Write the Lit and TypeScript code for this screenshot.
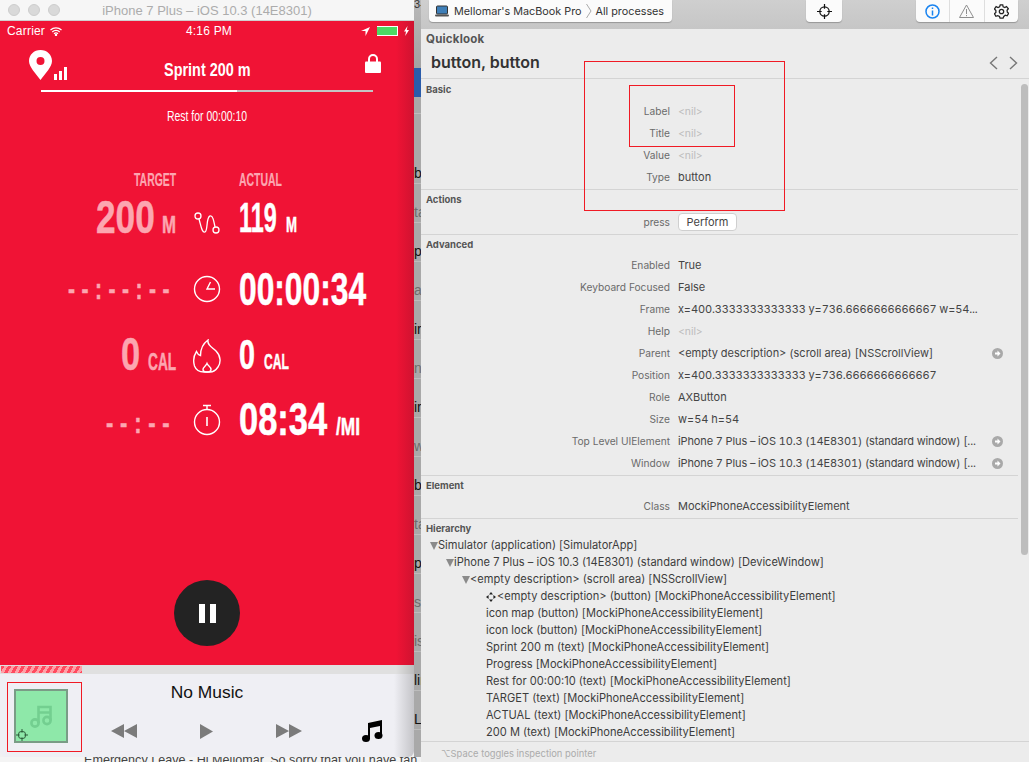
import { LitElement, html, css, svg } from "lit";
import { customElement } from "lit/decorators.js";

type Row = { k: string; v: string; nil?: boolean; arrow?: boolean; tight?: boolean };

const basic: Row[] = [
  { k: "Label", v: "<nil>", nil: true },
  { k: "Title", v: "<nil>", nil: true },
  { k: "Value", v: "<nil>", nil: true },
  { k: "Type", v: "button" },
];
const advanced: Row[] = [
  { k: "Enabled", v: "True" },
  { k: "Keyboard Focused", v: "False" },
  { k: "Frame", v: "x=400.3333333333333 y=736.6666666666667 w=54...", tight: true },
  { k: "Help", v: "<nil>", nil: true },
  { k: "Parent", v: "<empty description> (scroll area) [NSScrollView]", arrow: true },
  { k: "Position", v: "x=400.3333333333333 y=736.6666666666667", tight: true },
  { k: "Role", v: "AXButton" },
  { k: "Size", v: "w=54 h=54" },
  { k: "Top Level UIElement", v: "iPhone 7 Plus – iOS 10.3 (14E8301) (standard window) [...", arrow: true, tight: true },
  { k: "Window", v: "iPhone 7 Plus – iOS 10.3 (14E8301) (standard window) [...", arrow: true, tight: true },
];
const leaves = [
  "icon map (button) [MockiPhoneAccessibilityElement]",
  "icon lock (button) [MockiPhoneAccessibilityElement]",
  "Sprint 200 m (text) [MockiPhoneAccessibilityElement]",
  "Progress [MockiPhoneAccessibilityElement]",
  "Rest for 00:00:10 (text) [MockiPhoneAccessibilityElement]",
  "TARGET (text) [MockiPhoneAccessibilityElement]",
  "ACTUAL (text) [MockiPhoneAccessibilityElement]",
  "200 M (text) [MockiPhoneAccessibilityElement]",
];
const stripRows = [
  ["b", 1], ["ta", 0], ["p", 1], ["at", 0], ["ir", 1], ["ng", 0], ["ir", 1], ["w", 0],
  ["b", 1], ["ta", 0], ["p", 1], ["si", 0], ["is", 0], ["lir", 1], ["Le", 1],
] as [string, number][];

const tri = svg`<svg class="tri" width="8" height="8" viewBox="0 0 8 8"><path d="M0 0H8L4 8Z" fill="#8a8a8a"/></svg>`;
const cross = (c: string, s: number) => svg`<svg width="${s}" height="${s}" viewBox="0 0 16 16" fill="none" stroke="${c}" stroke-width="1.3"><circle cx="8" cy="8" r="5"/><path d="M8 0V5M8 11V16M0 8H5M11 8H16"/></svg>`;
const pointer = svg`<svg width="10" height="10" viewBox="0 0 10 10" fill="#222"><path d="M5 0L7 2.6H3ZM5 10L7 7.4H3ZM0 5L2.6 3V7ZM10 5L7.4 3V7Z"/></svg>`;

/* No condensed face is installed: the display type is Liberation Sans Bold narrowed to a measured width. */
const sq = (t: string, w: number, sx: number, size: number, cls = "") =>
  html`<span class="sq ${cls}" style="width:${w}px;font-size:${size}px"><span style="transform:scaleX(${sx})">${t}</span></span>`;

@customElement("app-root")
export class AppRoot extends LitElement {
  static styles = css`
    :host { display: block; width: 1029px; height: 762px; overflow: hidden; font-family: "Liberation Sans", sans-serif; }
    * { box-sizing: border-box; }
    .desk { position: relative; width: 1029px; height: 762px; display: grid; grid-template-columns: 414px 7px 608px; grid-template-rows: 757px 5px; background: #f1f1f1; }
    .sim { grid-column: 1; grid-row: 1; display: flex; flex-direction: column; border-radius: 0 0 6px 6px; overflow: hidden; position: relative; z-index: 1; }
    .titlebar { height: 21px; flex: none; background: #f6f6f6; border-bottom: 1px solid #cfcfcf; display: flex; align-items: center; padding-left: 8px; gap: 8px; position: relative; }
    .light { width: 12px; height: 12px; border-radius: 50%; background: #d9d9d9; border: 1px solid #cdcdcd; }
    .wintitle { position: absolute; left: 0; right: 0; text-align: center; font-size: 13px; color: #acacac; }
    .red { height: 644px; flex: none; background: linear-gradient(90deg, #f01335 0, #f01335 396px, #cf1230 414px); color: #fff; display: flex; flex-direction: column; position: relative; }
    .status { height: 20px; display: flex; align-items: center; padding: 0 5px 0 7px; font-size: 12px; position: relative; letter-spacing: .2px; }
    .status .time { position: absolute; left: 4px; right: 0; text-align: center; }
    .status .sp { flex: 1; }
    .status .wifi { margin-left: 5px; }
    .batt { width: 21px; height: 10px; background: #4cd964; border-top: 1px solid #fff; border-bottom: 1px solid #fff; border-right: 1px solid #fff; margin: 0 6px 0 7px; }
    .head { height: 29px; margin-top: 5px; position: relative; display: flex; justify-content: space-between; padding: 0 33px 0 29px; }
    .title { position: absolute; left: 0; right: 0; top: 13px; display: flex; justify-content: center; font-weight: 700; line-height: 22px; }
    .pin { display: flex; align-items: flex-end; gap: 2px; height: 32px; margin-top: 2px; }
    .lock { margin-top: 7px; }
    .prog { margin: 15px 41px 0 41px; height: 2px; background: #c4c4c4; }
    .prog i { display: block; width: 196px; height: 100%; background: #fff; }
    .rest { margin-top: 15px; display: flex; justify-content: center; line-height: 18px; }
    .sq { display: inline-block; white-space: nowrap; flex: none; }
    .sq > span { display: inline-block; transform-origin: left center; }
    .metrics { margin-top: 45px; display: grid; grid-template-columns: 177px 61px 1fr; grid-template-rows: 20px 62px 74px 64px 66px; align-items: center; font-weight: 700; }
    .cell { display: flex; align-items: baseline; line-height: 50px; white-space: nowrap; -webkit-text-stroke: .5px currentColor; }
    .tg { justify-content: flex-end; color: #fca6b0; padding-right: 1px; }
    .ac { padding-left: 1px; }
    .hd { line-height: 20px; color: #fca6b0; -webkit-text-stroke: .2px currentColor; }
    .ic { display: flex; justify-content: center; margin-left: -1px; }
    .ic.up1 { margin-top: -2px; }
    .ic.up2 { margin-top: -5px; }
    .ic.up3 { margin-top: -6px; }
    .g7 { gap: 7px; }
    .g8 { gap: 8px; }
    .g9 { gap: 9px; }
    .dashes { letter-spacing: 9.3px; }
    .pause { position: absolute; left: 174px; top: 559px; width: 66px; height: 66px; border-radius: 50%; background: #232323; display: flex; align-items: center; justify-content: center; gap: 5px; }
    .pause i { display: block; width: 6px; height: 19px; background: #fff; }
    .strip2 { height: 9px; flex: none; background: linear-gradient(90deg, #e0e0e0 0, #e0e0e0 396px, #bcbcbc 414px); padding: 1px 0 1px 1px; }
    .hatch { width: 81px; height: 7px; background: repeating-linear-gradient(120deg, #ff4a5f 0 3px, #ffa0a8 3px 6px); }
    .music { flex: 1; background: linear-gradient(90deg, #efeff4 0, #efeff4 394px, #c4c4c8 414px); display: flex; position: relative; padding: 15px 0 0 14px; }
    .album { width: 54px; height: 54px; background: #8ee8a9; border: 2px solid #7a9c86; position: relative; display: flex; align-items: center; justify-content: center; }
    .album .x { position: absolute; left: 0; bottom: 0; display: flex; }
    .mtext { position: absolute; left: 0; top: 9px; width: 414px; text-align: center; font-size: 17.4px; line-height: 19px; color: #111; }
    .ctrls { position: absolute; left: 111px; top: 46px; display: grid; grid-template-columns: 89px 76px 86px 21px; align-items: center; }
    .peek { grid-column: 1 / 3; grid-row: 2; overflow: hidden; background: #f4f4f4; font-size: 12.6px; line-height: 12px; color: #444; padding-left: 84px; white-space: nowrap; }
    .peek span { display: block; margin-top: -3px; }
    .bgstrip { grid-column: 2; grid-row: 1; background: #a9a9a9; display: flex; flex-direction: column; overflow: hidden; }
    .top { height: 68px; flex: none; background: linear-gradient(#b9b9b9, #a2a2a2); font-size: 11px; line-height: 8px; color: #333; }
    .blue { height: 29px; flex: none; background: #2a5caa; }
    .gap { height: 48px; flex: none; border-top: 16px solid #a9a9a9; box-shadow: inset 0 1px 0 #bdbdbd; }
    .sr { height: 39px; flex: none; border-bottom: 1px solid #bcbcbc; padding-top: 20px; font-size: 14px; line-height: 16px; color: #6d6d6d; white-space: nowrap; overflow: hidden; }
    .sr.d { color: #111; }
    .insp { grid-column: 3; grid-row: 1 / 3; background: #ececec; display: flex; flex-direction: column; position: relative; overflow: hidden; font-family: Inter, "Liberation Sans", sans-serif; font-size: 10.2px; color: #444; }
    .tb { height: 29px; flex: none; background: linear-gradient(#cfcfcf, #c6c6c6); display: flex; align-items: flex-start; padding-left: 8px; }
    .btn { height: 22px; background: #fbfbfb; border-radius: 0 0 4px 4px; box-shadow: 0 1px 1px rgba(0,0,0,.25); display: flex; align-items: center; }
    .crumb { width: 243px; padding-left: 6px; gap: 4px; font-size: 10.8px; color: #333; white-space: nowrap; }
    .crumb .lap { margin-right: 1px; }
    .target { width: 36px; justify-content: center; margin-left: 134px; }
    .tools { width: 102px; margin-left: 74px; }
    .tools span { flex: 1; display: flex; justify-content: center; align-items: center; height: 100%; border-left: 1px solid #dedede; }
    .tools span:first-child { border-left: 0; }
    .ql { height: 50px; flex: none; border-bottom: 1px solid #d4d4d4; position: relative; padding: 3px 0 0 5px; }
    .ql h4 { margin: 0; font-size: 11.5px; line-height: 14px; font-weight: 700; color: #555; letter-spacing: .2px; }
    .ql h2 { margin: 6px 0 0 5px; font-size: 16px; line-height: 20px; font-weight: 600; color: #333; }
    .nav { position: absolute; right: 11px; top: 27px; display: flex; gap: 11px; }
    section { flex: none; margin-right: 11px; border-bottom: 1px solid #d4d4d4; padding-bottom: 1px; }
    .st { padding-left: 5px; font-size: 9.5px; font-weight: 700; color: #555; height: 21px; line-height: 21px; }
    .st.s22 { line-height: 22px; }
    .st.s20 { line-height: 19px; }
    .st.s19 { height: 19px; line-height: 19px; }
    .st.s18 { height: 18px; line-height: 19px; }
    .row { height: 22px; display: grid; grid-template-columns: 249px 1fr 26px; column-gap: 8px; align-items: center; white-space: nowrap; }
    .row .k { text-align: right; color: #6a6a6a; }
    .row .v { color: #444; font-size: 11px; font-variant-numeric: tabular-nums; }
    .row .v.tight { letter-spacing: -.13px; }
    .row .v.nil { color: #bcbcbc; font-size: 10.4px; }
    .row .a { width: 11px; height: 11px; display: flex; }
    .perform { width: 59px; height: 18px; background: #fff; border: 1px solid #cfcfcf; border-radius: 4px; text-align: center; line-height: 16px; color: #444; font-size: 11px; }
    .tree { flex: 1; min-height: 0; overflow: hidden; }
    .tn { height: 17px; line-height: 17px; white-space: nowrap; display: flex; align-items: center; color: #3c3c3c; font-size: 11.1px; }
    .l0 { padding-left: 9px; }
    .l1 { padding-left: 25px; }
    .l2 { padding-left: 41px; }
    .l3 { padding-left: 65px; gap: 1px; }
    .tri { flex: none; }
    .foot { height: 21px; flex: none; border-top: 1px solid #d4d4d4; padding-left: 20px; line-height: 24px; color: #ababab; font-size: 9.4px; }
    .thumb { position: absolute; right: 1px; top: 84px; width: 7px; height: 471px; border-radius: 4px; background: #bdbdbd; }
    .mark { position: absolute; border: 1px solid #f01a24; z-index: 5; pointer-events: none; }
    .m1 { left: 584px; top: 61px; width: 201px; height: 150px; }
    .m2 { left: 629px; top: 85px; width: 106px; height: 62px; }
    .m3 { left: 7px; top: 682px; width: 75px; height: 70px; }
  `;

  private rowT(r: Row) {
    return html`<div class="row"><span class="k">${r.k}</span><span class="v ${r.nil ? "nil" : ""} ${r.tight ? "tight" : ""}">${r.v}</span>${r.arrow
      ? html`<span class="a"><svg width="11" height="11" viewBox="0 0 11 11"><circle cx="5.5" cy="5.5" r="5.5" fill="#a9a9a9"/><path d="M3 4.5H5.5V2.5L8.5 5.5L5.5 8.5V6.5H3Z" fill="#fff"/></svg></span>`
      : html`<span></span>`}</div>`;
  }

  render() {
    return html`<div class="desk">
      <div class="sim">
        <div class="titlebar">
          <span class="light"></span><span class="light"></span><span class="light"></span>
          <span class="wintitle">iPhone 7 Plus – iOS 10.3 (14E8301)</span>
        </div>
        <div class="red">
          <div class="status">
            <span>Carrier</span>
            <svg class="wifi" width="12" height="9" viewBox="0 0 12 9" fill="none" stroke="#fff" stroke-width="1.2"><path d="M.5 3A8 8 0 0 1 11.5 3M2.3 5A5.2 5.2 0 0 1 9.7 5M4 6.8A2.6 2.6 0 0 1 8 6.8"/><circle cx="6" cy="8" r=".6" fill="#fff"/></svg>
            <span class="time">4:16 PM</span>
            <span class="sp"></span>
            <svg width="9" height="9" viewBox="0 0 9 9"><path d="M9 0L0 4H4.5V9Z" fill="#fff"/></svg>
            <span class="batt"></span>
            <svg width="5" height="10" viewBox="0 0 5 10"><path d="M3.5 0L0 5.5H2L1.2 10L5 4H2.8Z" fill="#fff"/></svg>
          </div>
          <div class="head">
            <div class="pin">
              <svg width="23" height="30" viewBox="0 0 23 30"><path fill-rule="evenodd" d="M11.5 0C5 0 0 4.8 0 11C0 17 6.5 23 11.5 30C16.5 23 23 17 23 11C23 4.8 18 0 11.5 0ZM11.5 7A4 4 0 1 1 11.5 15A4 4 0 1 1 11.5 7Z" fill="#fff"/></svg>
              <svg width="13" height="13" viewBox="0 0 13 13" fill="#fff"><rect x="0" y="7" width="3" height="6"/><rect x="5" y="4" width="3" height="9"/><rect x="10" y="0" width="3" height="13"/></svg>
            </div>
            <div class="title">${sq("Sprint 200 m", 87, 0.76, 19)}</div>
            <svg class="lock" width="16" height="20" viewBox="0 0 16 20"><path d="M4 9V6A4 4 0 0 1 12 6V9" fill="none" stroke="#fff" stroke-width="2"/><rect x="0" y="8.5" width="16" height="11.5" rx="1" fill="#fff"/></svg>
          </div>
          <div class="prog"><i></i></div>
          <div class="rest">${sq("Rest for 00:00:10", 80, 0.72, 14.5)}</div>
          <div class="metrics">
            <div class="cell tg hd">${sq("TARGET", 42, 0.58, 18)}</div><div></div><div class="cell ac hd">${sq("ACTUAL", 43, 0.58, 18)}</div>

            <div class="cell tg g7">${sq("200", 59, 0.75, 47)}${sq("M", 14, 0.7, 24)}</div>
            <div class="ic up1"><svg width="30" height="30" viewBox="0 0 30 30" fill="none" stroke="#fff" stroke-width="1.3"><circle cx="6" cy="11" r="3"/><circle cx="24" cy="25" r="3"/><path d="M7 14C9 21 10 28 13 27C16 26 14 12 18 11C21 10 22 17 23 22"/></svg></div>
            <div class="cell ac g8">${sq("119", 39, 0.557, 42)}${sq("M", 11, 0.6, 22)}</div>

            <div class="cell tg">${sq("--:--:--", 108, 0.7, 30, "dashes")}</div>
            <div class="ic"><svg width="30" height="30" viewBox="0 0 30 30" fill="none" stroke="#fff" stroke-width="1.4"><circle cx="15" cy="15" r="12.5"/><path d="M18.5 8L15 15H23"/></svg></div>
            <div class="cell ac">${sq("00:00:34", 127, 0.69, 46)}</div>

            <div class="cell tg g8">${sq("0", 19, 0.73, 47)}${sq("CAL", 28, 0.57, 24)}</div>
            <div class="ic up2"><svg width="30" height="34" viewBox="0 0 30 34" fill="none" stroke="#fff" stroke-width="1.4"><path d="M16 1C15 6 20 8 24 12C29 17 29 24 26 28C24 31 21 33 18 33H12C8 33 4 31 2.5 27C1 22 1.5 17 4.5 12.5C5.5 15 6.5 16 8.5 16.5C8.5 10 10.5 5 16 1Z"/><path d="M15 24.5C16 27 19 27.5 19 30.5C19 32 18 33 15 33C12 33 11 32 11 30.5C11 28 14 27 15 24.5Z"/></svg></div>
            <div class="cell ac g9">${sq("0", 16, 0.67, 43)}${sq("CAL", 25, 0.55, 22)}</div>

            <div class="cell tg">${sq("--:--", 70, 0.73, 30, "dashes")}</div>
            <div class="ic up3"><svg width="30" height="32" viewBox="0 0 30 32" fill="none" stroke="#fff" stroke-width="1.4"><circle cx="15" cy="18" r="12.5"/><path d="M11 1.5H19M15 1.5V5"/><path d="M15 13V22" stroke-width="1.6"/></svg></div>
            <div class="cell ac g9">${sq("08:34", 88, 0.75, 46)}${sq("/MI", 24, 0.72, 24)}</div>
          </div>
          <div class="pause"><i></i><i></i></div>
        </div>
        <div class="strip2"><div class="hatch"></div></div>
        <div class="music">
          <div class="album">
            <svg width="24" height="24" viewBox="0 0 24 24" fill="none" stroke="#73cf90" stroke-width="2.6"><circle cx="6" cy="19" r="3.6"/><circle cx="18" cy="16.5" r="3.6"/><path d="M9.5 19V3H21.5V16.5M9.5 8.5H21.5"/></svg>
            <span class="x">${cross("#2c5a3a", 12)}</span>
          </div>
          <div class="mtext">No Music</div>
          <div class="ctrls">
            <svg width="26" height="14" viewBox="0 0 26 14" fill="#7b7b7b"><path d="M13 0V14L0 7ZM26 0V14L13 7Z"/></svg>
            <svg width="13" height="15" viewBox="0 0 13 15" fill="#7b7b7b"><path d="M0 0L13 7.5L0 15Z"/></svg>
            <svg width="26" height="14" viewBox="0 0 26 14" fill="#7b7b7b"><path d="M0 0L13 7L0 14ZM13 0L26 7L13 14Z"/></svg>
            <svg width="21" height="22" viewBox="0 0 21 22" fill="#000"><path d="M6 3L20 0V15H18V6L8 8V19H6Z"/><ellipse cx="4" cy="18.5" rx="4" ry="3.5"/><ellipse cx="16.5" cy="15.5" rx="4" ry="3.5"/></svg>
          </div>
        </div>
      </div>

      <div class="bgstrip">
        <div class="top">3-</div>
        <div class="blue"></div>
        <div class="gap"></div>
        ${stripRows.map(([t, d]) => html`<div class="sr ${d ? "d" : ""}">${t}</div>`)}
      </div>
      <div class="peek"><span>Emergency Leave - Hi Mellomar. So sorry that you have fan</span></div>

      <div class="insp">
        <div class="tb">
          <div class="btn crumb">
            <svg class="lap" width="14" height="12" viewBox="0 0 14 12"><rect x="1.5" y="1" width="11" height="8" rx="1" fill="#3f7fb8" stroke="#333"/><rect x="0" y="9.5" width="14" height="2" rx="1" fill="#555"/></svg>
            <span>Mellomar's MacBook Pro</span>
            <svg width="6" height="14" viewBox="0 0 6 14" fill="none" stroke="#aaa"><path d="M.5 0L5 7L.5 14"/></svg>
            <span>All processes</span>
          </div>
          <div class="btn target">${cross("#111", 15)}</div>
          <div class="btn tools">
            <span><svg width="15" height="15" viewBox="0 0 15 15" fill="none" stroke="#1a84f0" stroke-width="1.5"><circle cx="7.5" cy="7.5" r="6.5"/><path d="M7.5 6.5V11.5M7.5 3.5V5"/></svg></span>
            <span><svg width="15" height="14" viewBox="0 0 15 14" fill="none" stroke="#8f8f8f"><path d="M7.5 1L14.5 13.5H.5Z"/><path d="M7.5 5V10M7.5 11V12.2"/></svg></span>
            <span><svg width="15" height="15" viewBox="0 0 24 24" fill="none" stroke="#222" stroke-width="2"><circle cx="12" cy="12" r="3.5"/><path d="M10 1.5H14L14.6 4.6L17.4 5.8L20 4L23 7.6L20.9 10L21.3 13L23.5 15L21 19L18 18L15.6 20L14.6 22.5H9.6L8.8 20L6 18.6L3 19.6L.8 15.6L3 13.6V10.4L.8 8L3.4 4.2L6.4 5.6L9 4.4Z"/></svg></span>
          </div>
        </div>
        <div class="ql">
          <h4>Quicklook</h4>
          <h2>button, button</h2>
          <div class="nav">
            <svg width="9" height="14" viewBox="0 0 9 14" fill="none" stroke="#777" stroke-width="1.4"><path d="M8 1L1.5 7L8 13"/></svg>
            <svg width="9" height="14" viewBox="0 0 9 14" fill="none" stroke="#777" stroke-width="1.4"><path d="M1 1L7.5 7L1 13"/></svg>
          </div>
        </div>
        <section>
          <div class="st s22">Basic</div>
          ${basic.map((r) => this.rowT(r))}
        </section>
        <section>
          <div class="st s20">Actions</div>
          <div class="row"><span class="k">press</span><span class="perform">Perform</span><span></span></div>
        </section>
        <section>
          <div class="st s19">Advanced</div>
          ${advanced.map((r) => this.rowT(r))}
        </section>
        <section>
          <div class="st s19">Element</div>
          <div class="row"><span class="k">Class</span><span class="v">MockiPhoneAccessibilityElement</span><span></span></div>
        </section>
        <div class="tree">
          <div class="st s18">Hierarchy</div>
          <div class="tn l0">${tri}Simulator (application) [SimulatorApp]</div>
          <div class="tn l1">${tri}iPhone 7 Plus – iOS 10.3 (14E8301) (standard window) [DeviceWindow]</div>
          <div class="tn l2">${tri}&lt;empty description&gt; (scroll area) [NSScrollView]</div>
          <div class="tn l3">${pointer}<span>&lt;empty description&gt; (button) [MockiPhoneAccessibilityElement]</span></div>
          ${leaves.map((t) => html`<div class="tn l3">${t}</div>`)}
        </div>
        <div class="foot">⌥Space toggles inspection pointer</div>
        <div class="thumb"></div>
      </div>

      <div class="mark m1"></div>
      <div class="mark m2"></div>
      <div class="mark m3"></div>
    </div>`;
  }
}
